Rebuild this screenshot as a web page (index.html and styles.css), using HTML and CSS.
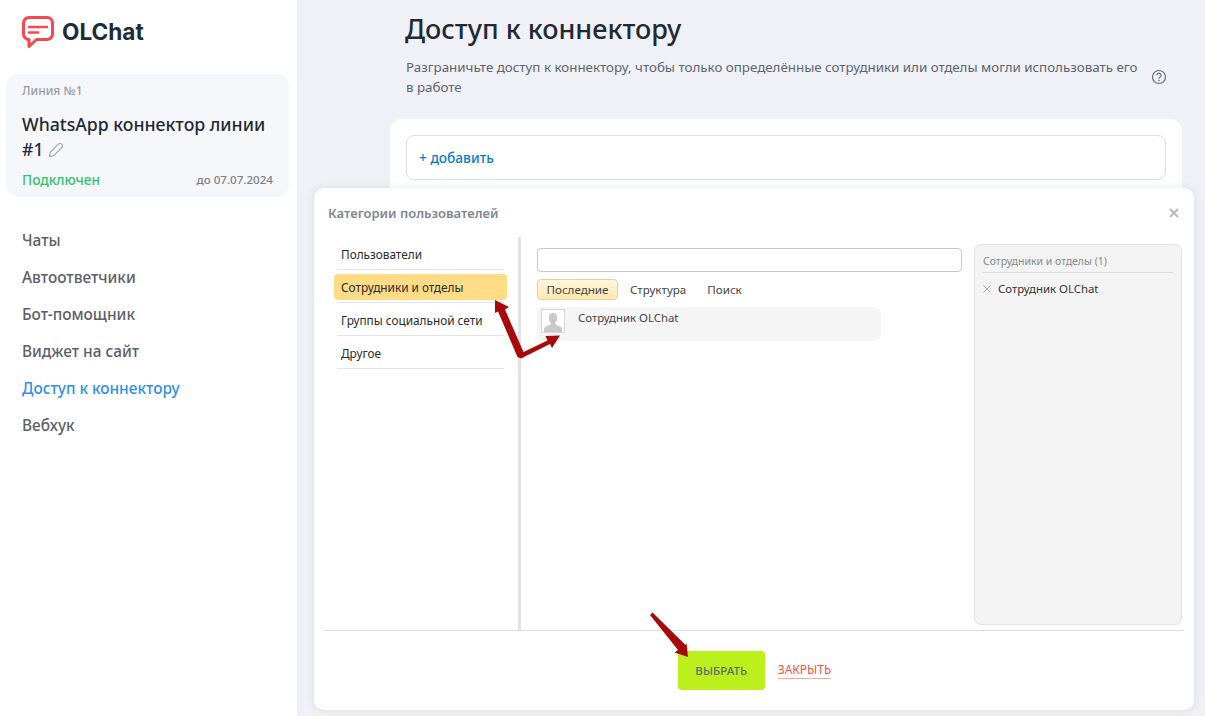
FILE: index.html
```html
<!DOCTYPE html>
<html lang="ru">

<head>
    <meta charset="UTF-8">
    <title>OLChat - Доступ к коннектору</title>
    <link rel="stylesheet" href="styles.css">
</head>

<body>
    <div class="app">
        <aside class="sidebar">
            <div class="logo">
                <svg class="logoIcon" width="32" height="33" viewBox="0 0 32 33" fill="none">
                    <path d="M7 1.500h18a5.500 5.500 0 0 1 5.500 5.500v11a5.500 5.500 0 0 1-5.500 5.500H14.500L7 30.500v-7A5.500 5.500 0 0 1 1.500 18V7A5.500 5.500 0 0 1 7 1.500z" stroke="#f9474f" stroke-width="3" stroke-linejoin="round"/>
                    <path d="M7 11h18M7 16.500h9" stroke="#f9474f" stroke-width="2.600" stroke-linecap="round"/>
                </svg>
                <span class="logoText">OLChat</span>
            </div>
            <div class="lineCard">
                <div class="lineLabel">Линия №1</div>
                <div class="lineName">WhatsApp коннектор линии #1
                    <svg class="pencil" width="16" height="16" viewBox="0 0 16 16" fill="none">
                        <path d="M1.500 14.500l.8-4.300 8-8a2.400 2.400 0 0 1 3.500 3.500l-8 8z" stroke="#a5a5a5" stroke-width="1.200" stroke-linejoin="round"/>
                    </svg>
                </div>
                <div class="lineStatus">
                    <span class="connected">Подключен</span>
                    <span class="until">до 07.07.2024</span>
                </div>
            </div>
            <nav class="menu">
                <a class="menuItem">Чаты</a>
                <a class="menuItem">Автоответчики</a>
                <a class="menuItem">Бот-помощник</a>
                <a class="menuItem">Виджет на сайт</a>
                <a class="menuItem active">Доступ к коннектору</a>
                <a class="menuItem">Вебхук</a>
            </nav>
        </aside>

        <main class="content">
            <h1>Доступ к коннектору</h1>
            <div class="intro">
                <p>Разграничьте доступ к коннектору, чтобы только определённые сотрудники или отделы могли использовать его в работе</p>
                <svg class="help" width="16" height="16" viewBox="0 0 16 16" fill="none">
                    <circle cx="8" cy="8" r="6.500" stroke="#666d78" stroke-width="1.200"/>
                    <path d="M5.900 6.300a2.100 2.100 0 1 1 3.300 1.700c-.8.500-1.200.9-1.200 1.700" stroke="#666d78" stroke-width="1.200"/>
                    <circle cx="8" cy="11.600" r=".8" fill="#666d78"/>
                </svg>
            </div>
            <section class="panel">
                <div class="addBox"><a class="addLink">+ добавить</a></div>
            </section>
        </main>
    </div>

    <div class="dialog">
        <div class="dialogHead">
            <span class="dialogTitle">Категории пользователей</span>
            <svg class="dialogClose" width="10" height="10" viewBox="0 0 10 10">
                <path d="M1 1l8 8M9 1l-8 8" stroke="#b4b8be" stroke-width="2"/>
            </svg>
        </div>
        <div class="dialogBody">
            <ul class="categories">
                <li>Пользователи</li>
                <li class="selected">Сотрудники и отделы</li>
                <li>Группы социальной сети</li>
                <li>Другое</li>
            </ul>
            <div class="picker">
                <input class="search" type="text">
                <div class="tabs">
                    <span class="tab current">Последние</span>
                    <span class="tab">Структура</span>
                    <span class="tab">Поиск</span>
                </div>
                <div class="person">
                    <span class="avatar">
                        <svg width="22" height="22" viewBox="0 0 22 22">
                            <path d="M11 2c2.700 0 4.200 2 4.200 4.700 0 2.200-.9 4-2 5v1.800c2.500 1 6.300 2 6.800 4V22H2v-4.500c.5-2 4.300-3 6.800-4v-1.800c-1.100-1-2-2.800-2-5C6.800 4 8.300 2 11 2z" fill="#c9c9c9"/>
                        </svg>
                    </span>
                    <span class="personName">Сотрудник OLChat</span>
                </div>
            </div>
            <div class="chosen">
                <div class="chosenTitle">Сотрудники и отделы (1)</div>
                <div class="chosenItem">
                    <svg width="8" height="8" viewBox="0 0 8 8">
                        <path d="M.5.500l7 7M7.500.500l-7 7" stroke="#a8a8a8" stroke-width="1"/>
                    </svg>
                    Сотрудник OLChat
                </div>
            </div>
        </div>
        <div class="dialogFoot">
            <button class="selectBtn" type="button">ВЫБРАТЬ</button>
            <a class="closeLink">ЗАКРЫТЬ</a>
        </div>
    </div>

    <!-- red arrows drawn over the screenshot -->
    <svg class="arrows" width="1205" height="716" viewBox="0 0 1205 716" fill="#a80a0a">
        <path d="M495 300l14 7-4 2.500 18.500 42.500 24-11.500-2-4.500 14.500-.5-8 12.500-2-4-29 14.500-3.500-1.500-19.500-45.500-3 1.500z"/>
        <path d="M650 615l2.500-2.500 33 32.500 1-2 1.500 14-13.500-4.500 3.500-2.500z"/>
    </svg>
</body>

</html>
```

FILE: styles.css
```css
body {
    margin: 0;
    height: 716px;
    overflow: hidden;
    position: relative;
    font-family: "Noto Sans", "Open Sans", Arial, sans-serif;
    background-color: #f0f1f6;
    color: #1f2a37;
}

.app {
    display: flex;
    height: 716px;
}

.sidebar {
    width: 297px;
    flex-shrink: 0;
    box-sizing: border-box;
    background-color: #ffffff;
    padding: 15px 8px 0 6px;
}

.logo {
    display: flex;
    align-items: center;
    gap: 8px;
    padding-left: 16px;
    height: 34px;
    margin-bottom: 25px;
}

.logoText {
    font-family: Inter, sans-serif;
    font-size: 22.600px;
    font-weight: 700;
    color: #1e2b3a;
    padding-bottom: 2px;
}

.lineCard {
    background-color: #f6f7fa;
    border-radius: 12px;
    padding: 9px 16px 8px;
    height: 123px;
    box-sizing: border-box;
}

.lineLabel {
    font-size: 12px;
    font-weight: 500;
    color: #9b9da3;
    line-height: 16px;
}

.lineName {
    margin-top: 13px;
    font-size: 17.700px;
    font-weight: 500;
    line-height: 25px;
    color: #1f2a37;
}

.pencil {
    vertical-align: -2px;
}

.lineStatus {
    display: flex;
    justify-content: space-between;
    align-items: center;
    margin-top: 8px;
}

.connected {
    font-size: 13.700px;
    font-weight: 500;
    color: #2fc26e;
}

.until {
    font-size: 11.600px;
    font-weight: 500;
    color: #7c8087;
}

.menu {
    display: flex;
    flex-direction: column;
    gap: 13px;
    margin-top: 32px;
    padding-left: 16px;
}

.menuItem {
    font-size: 15.400px;
    font-weight: 500;
    line-height: 24px;
    color: #5c5f66;
}

.menuItem.active {
    color: #2f8fe6;
}

.content {
    width: 792px;
    margin-left: 93px;
}

h1 {
    margin: 10px 0 0 15px;
    font-size: 27px;
    font-weight: 500;
    line-height: 38px;
    color: #1f2a37;
}

.intro {
    display: flex;
    align-items: center;
    gap: 9px;
    margin: 9px 15px 0 16px;
    font-size: 13.350px;
    line-height: 20px;
    color: #5b6570;
}

.intro p {
    margin: 0;
    width: 736px;
}

.help {
    flex-shrink: 0;
}

.panel {
    margin-top: 22px;
    background-color: #ffffff;
    border-radius: 12px;
    height: 120px;
    padding: 16px;
    box-sizing: border-box;
}

.addBox {
    height: 45px;
    box-sizing: border-box;
    border: 1px solid #dcdfe4;
    border-radius: 8px;
    padding: 0 12px;
    display: flex;
    align-items: center;
}

.addLink {
    font-size: 13.700px;
    font-weight: 500;
    color: #0b7bc9;
}

.dialog {
    position: absolute;
    left: 314px;
    top: 188px;
    width: 880px;
    height: 522px;
    box-sizing: border-box;
    background-color: #ffffff;
    border-radius: 10px;
    box-shadow: 0 0 8px rgba(60, 70, 90, 0.12);
    display: flex;
    flex-direction: column;
    padding: 0 10px;
}

.dialogHead {
    height: 49px;
    display: flex;
    justify-content: space-between;
    align-items: center;
    padding: 0 5px 0 4px;
    flex-shrink: 0;
}

.dialogTitle {
    font-size: 13px;
    font-weight: 600;
    color: #80868f;
}

.dialogBody {
    display: flex;
    flex: 1;
    min-height: 0;
}

.categories {
    list-style: none;
    margin: 0;
    padding: 0;
    width: 194px;
    box-sizing: border-box;
    font-size: 11.800px;
    color: #2a2a2a;
    flex-shrink: 0;
}

.categories li {
    height: 33px;
    box-sizing: border-box;
    margin: 0 14px 0 13px;
    padding: 0 4px;
    line-height: 35px;
    border-bottom: 1px solid #e6e6e8;
}

.categories li.selected {
    margin: 4px 11px 2px 10px;
    padding: 0 7px;
    height: 26px;
    line-height: 26px;
    background-color: #ffdc85;
    border-bottom: none;
    border-radius: 4px;
}

.categories li.selected + li {
    height: 34px;
    border-top: 1px solid #e6e6e8;
}

.picker {
    width: 445px;
    box-sizing: border-box;
    border-left: 3px solid #e2e2e2;
    padding: 11px 1px 0 16px;
    flex-shrink: 0;
}

.search {
    display: block;
    width: 100%;
    height: 24px;
    box-sizing: border-box;
    border: 1px solid #c8c8c8;
    border-radius: 4px;
    background-color: #ffffff;
    padding: 0 6px;
}

.tabs {
    display: flex;
    align-items: center;
    margin-top: 7px;
    font-size: 11.600px;
    color: #444444;
}

.tab {
    height: 21px;
    line-height: 21px;
    padding: 0 8.500px;
    margin-right: 3px;
}

.tab + .tab {
    margin-right: 0;
    padding: 0 12px 0 9px;
}

.tab.current {
    box-sizing: border-box;
    line-height: 19px;
    border: 1px solid #e3d2a2;
    border-radius: 4px;
    background: linear-gradient(#fff7e0, #ffe7ad);
}

.person {
    display: flex;
    align-items: flex-start;
    gap: 13px;
    width: 344px;
    height: 34px;
    box-sizing: border-box;
    margin-top: 7px;
    padding: 2px 4px;
    border-radius: 6px;
    background-color: #f5f5f5;
    font-size: 11.400px;
    color: #444444;
}

.avatar {
    width: 24px;
    height: 24px;
    flex-shrink: 0;
    box-sizing: border-box;
    border: 1px solid #d6d6d6;
    background-color: #ffffff;
    overflow: hidden;
}

.avatar svg {
    display: block;
    margin-top: 1px;
}

.personName {
    line-height: 16px;
    margin-top: 1px;
}

.chosen {
    margin-left: 11px;
    width: 208px;
    height: 381px;
    box-sizing: border-box;
    border: 1px solid #e2e2e2;
    border-radius: 7px;
    background-color: #f3f3f3;
    padding: 0 8px;
    margin-top: 7px;
}

.chosenTitle {
    height: 27px;
    line-height: 32px;
    font-size: 10.500px;
    color: #8a8a8a;
    border-bottom: 1px solid #dcdcdc;
}

.chosenItem {
    display: flex;
    align-items: center;
    gap: 7px;
    margin-top: 8px;
    font-size: 11.400px;
    line-height: 16px;
    color: #333333;
}

.dialogFoot {
    height: 80px;
    flex-shrink: 0;
    border-top: 1px solid #dddddd;
    display: flex;
    align-items: flex-start;
    justify-content: center;
    gap: 13px;
    padding: 20px 0 0 1px;
    box-sizing: border-box;
}

.selectBtn {
    width: 87px;
    height: 39px;
    border: none;
    border-radius: 4px;
    background-color: #bbf01d;
    color: #5f6a70;
    font-family: inherit;
    font-size: 11.600px;
    font-weight: 500;
}

.closeLink {
    margin-top: 11px;
    font-size: 12px;
    line-height: 16px;
    color: #f5543f;
    border-bottom: 1px solid #f9a79c;
}

.arrows {
    position: absolute;
    left: 0;
    top: 0;
    pointer-events: none;
}
```
